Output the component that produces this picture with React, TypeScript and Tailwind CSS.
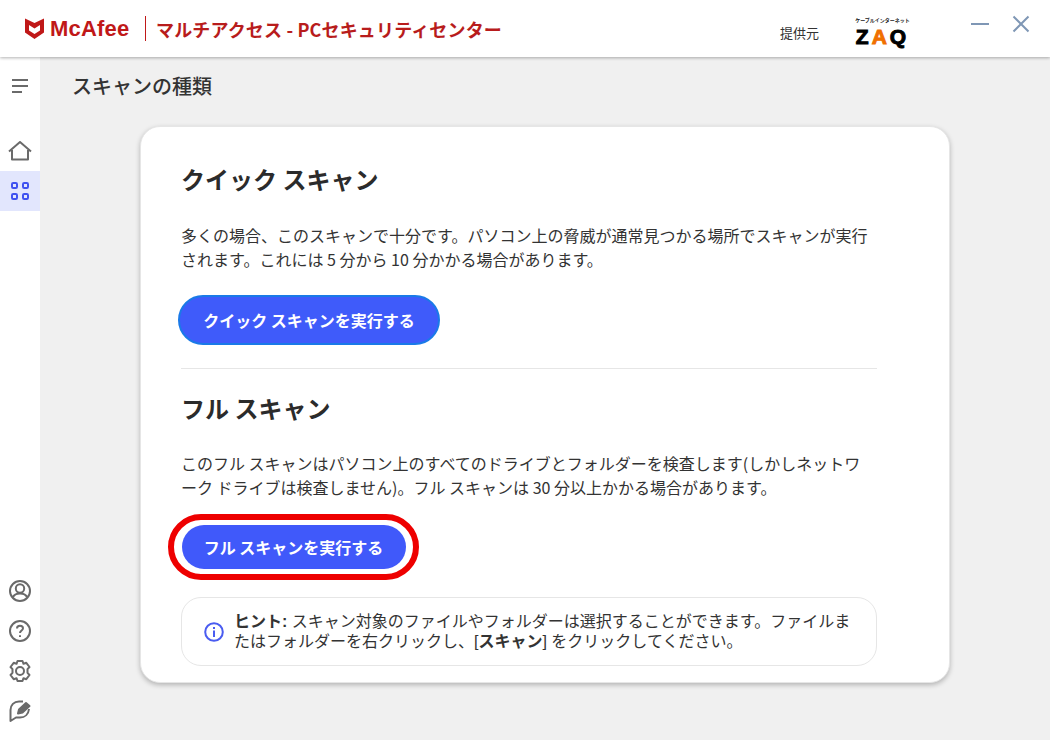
const jp = "font-['Noto_Sans_CJK_JP','Noto_Sans',sans-serif]";

function Shield() {
  return (
    <svg width="19" height="21" viewBox="0 0 19 21" className="shrink-0">
      <path d="M0 0.5 L9.5 5 L19 0.5 V14.5 L9.5 21 L0 14.5 Z M4 7 V12.5 L9.5 16 L15 12.5 V7 L9.5 10.5 Z" fill="#c01818" fillRule="evenodd" />
    </svg>
  );
}

const iconStroke = "#6a6a6a";

function Menu() {
  return (
    <svg width="18" height="16" viewBox="0 0 18 16" fill="none" stroke={iconStroke} strokeWidth="2">
      <path d="M1 2H17M1 8H17M1 14H11" />
    </svg>
  );
}
function Home() {
  return (
    <svg width="24" height="20" viewBox="0 0 24 20" fill="none" stroke={iconStroke} strokeWidth="2" strokeLinejoin="round">
      <path d="M1 10.5 L12 1 L23 10.5 M4 9 V18.5 H20 V9" />
    </svg>
  );
}
function Grid() {
  return (
    <svg width="20" height="20" viewBox="0 0 20 20" fill="none" stroke="#3f52f0" strokeWidth="2">
      <rect x="2" y="2" width="5" height="5" rx="1.2" />
      <rect x="13" y="2" width="5" height="5" rx="1.2" />
      <rect x="2" y="13" width="5" height="5" rx="1.2" />
      <rect x="13" y="13" width="5" height="5" rx="1.2" />
    </svg>
  );
}
function User() {
  return (
    <svg width="24" height="24" viewBox="0 0 24 24" fill="none" stroke={iconStroke} strokeWidth="2">
      <circle cx="12" cy="12" r="10" />
      <circle cx="12" cy="9.5" r="4.2" />
      <path d="M4.8 18.5 C6 15.5 9 14.5 12 14.5 C15 14.5 18 15.5 19.2 18.5" />
    </svg>
  );
}
function Help() {
  return (
    <svg width="24" height="24" viewBox="0 0 24 24" fill="none" stroke={iconStroke} strokeWidth="2">
      <circle cx="12" cy="12" r="10" />
      <path d="M9 9.5 C9 7.5 10.5 6.8 12 6.8 C13.7 6.8 15 7.8 15 9.3 C15 11.5 12 11.5 12 14" />
      <path d="M12 16.2V18" />
    </svg>
  );
}
function Gear() {
  return (
    <svg width="24" height="24" viewBox="0 0 24 24" fill="none" stroke={iconStroke} strokeWidth="2" strokeLinejoin="round">
      <circle cx="12" cy="12" r="4" />
      <path d="M9.5 2 H14.5 L15.5 4.8 L18.3 3.8 L21.5 8 L19.5 10.2 V13.8 L21.5 16 L18.3 20.2 L15.5 19.2 L14.5 22 H9.5 L8.5 19.2 L5.7 20.2 L2.5 16 L4.5 13.8 V10.2 L2.5 8 L5.7 3.8 L8.5 4.8 Z" />
    </svg>
  );
}
function Feedback() {
  return (
    <svg width="24" height="24" viewBox="0 0 24 24" fill="none" stroke={iconStroke} strokeWidth="2" strokeLinejoin="round">
      <path d="M15 2.5 H11 C6 2.5 2.5 6 2.5 11 V22 L8 18.5 H12 C17 18.5 20.5 15 21 10" />
      <path d="M10 14.5 L11 10.5 L18 4 L21.5 7 L14.5 13.5 Z" fill={iconStroke} />
    </svg>
  );
}
function Info() {
  return (
    <svg width="20" height="20" viewBox="0 0 20 20" fill="none" stroke="#4a5cf0" strokeWidth="2">
      <circle cx="10" cy="10" r="8.8" />
      <path d="M10 8.5V15" />
      <path d="M10 5V7" />
    </svg>
  );
}

export default function App() {
  return (
    <div className={`${jp} w-[1050px] h-[740px] overflow-hidden flex flex-col bg-[#f0f0f0] text-[#333]`}>
      <header className="relative z-10 h-[57px] shrink-0 bg-white shadow-[0_1px_3px_rgba(0,0,0,0.3)] flex items-center">
        <div className="ml-[25px] flex items-center">
          <Shield />
          <span className="ml-[6px] w-[82px] text-[22px] leading-none font-bold text-[#c01818] font-['Liberation_Sans',sans-serif] whitespace-nowrap tracking-[0.2px]">McAfee</span>
          <span className="ml-[13px] w-px h-[25px] bg-[#c01818]" />
          <span className="ml-[10px] text-[18px] leading-none font-bold text-[#b81c1c] whitespace-nowrap tracking-[0.15px]">マルチアクセス - PCセキュリティセンター</span>
        </div>
        <div className="ml-auto flex items-center">
          <span className="text-[13px] text-[#333] mr-[35px] mt-[8px]">提供元</span>
          <div className="flex flex-col items-center w-[57px] mt-[6px]">
            <span className="text-[5px] leading-[8px] font-bold text-[#222] whitespace-nowrap">ケーブルインターネット</span>
            <span className="mt-[3px] text-[21px] leading-[20px] font-bold font-['Liberation_Sans',sans-serif] tracking-[3px] text-black whitespace-nowrap [-webkit-text-stroke:1px_currentColor]">Z<span className="text-[#f07000]">A</span>Q</span>
          </div>
          <div className="ml-[60px] mr-[20px] flex items-center gap-[23px] -mt-[10px]">
            <svg width="18" height="2" viewBox="0 0 18 2"><path d="M0 1H18" stroke="#7f97b5" strokeWidth="2" /></svg>
            <svg width="18" height="18" viewBox="0 0 18 18"><path d="M1.5 1.5L16.5 16.5M16.5 1.5L1.5 16.5" stroke="#7f97b5" strokeWidth="2" /></svg>
          </div>
        </div>
      </header>

      <div className="flex flex-1 min-h-0">
        <aside className="w-[40px] shrink-0 bg-white flex flex-col items-center">
          <div className="mt-[21px] h-[16px]"><Menu /></div>
          <div className="mt-[47px] h-[20px]"><Home /></div>
          <div className="mt-[10px] w-full h-[40px] bg-[#e2e6fd] flex items-center justify-center"><Grid /></div>
          <div className="mt-auto mb-[17px] flex flex-col items-center gap-[16px]">
            <div className="h-[24px]"><User /></div>
            <div className="h-[24px]"><Help /></div>
            <div className="h-[24px]"><Gear /></div>
            <div className="h-[24px]"><Feedback /></div>
          </div>
        </aside>

        <main className="flex-1 min-w-0 flex flex-col">
          <h1 className="ml-[32px] mt-[14px] text-[20px] leading-[30px] font-medium text-[#333]">スキャンの種類</h1>
          <section className="ml-[100px] mt-[25px] w-[810px] h-[557px] bg-white rounded-[20px] border border-[#e6e6e6] shadow-[0_2px_5px_rgba(0,0,0,0.25)] pl-[40px] pr-[72px] pt-[34px]">
            <h2 className="text-[24px] leading-[36px] font-bold text-[#2b2b2b]">クイック スキャン</h2>
            <p className="mt-[26px] text-[16px] leading-[24px] text-[#333]">多くの場合、このスキャンで十分です。パソコン上の脅威が通常見つかる場所でスキャンが実行されます。これには 5 分から 10 分かかる場合があります。</p>
            <button className="mt-[24px] -ml-[3px] h-[50px] w-[262px] rounded-full bg-[#3f5bfa] border-2 border-[#1a7ae8] text-white text-[16px] font-bold whitespace-nowrap">クイック スキャンを実行する</button>
            <div className="mt-[23px] h-px bg-[#e6e6e6]" />
            <h2 className="mt-[21px] text-[24px] leading-[36px] font-bold text-[#2b2b2b]">フル スキャン</h2>
            <p className="mt-[25px] max-w-[690px] text-[16px] leading-[24px] text-[#333]">このフル スキャンはパソコン上のすべてのドライブとフォルダーを検査します(しかしネットワーク ドライブは検査しません)。フル スキャンは 30 分以上かかる場合があります。</p>
            <div className="mt-[15px] -ml-[13px] w-[251px] h-[66px] rounded-full border-[6px] border-[#ee0000] flex items-center justify-center">
              <button className="h-[44px] w-[224px] rounded-full bg-[#4059fa] text-white text-[16px] font-bold whitespace-nowrap">フル スキャンを実行する</button>
            </div>
            <div className="mt-[17px] w-[696px] h-[69px] rounded-[20px] border border-[#e6e6e6] flex items-center pl-[22px] pr-[20px] gap-[10px]">
              <span className="shrink-0"><Info /></span>
              <div className="font-['Liberation_Sans','Noto_Sans_CJK_JP',sans-serif] text-[16px] leading-[20px] text-[#333] whitespace-nowrap">
                <div><b className="font-bold">ヒント:</b> <span>スキャン対象のファイルやフォルダーは選択することができます。ファイルま</span></div>
                <div><span>たはフォルダーを右クリックし、[</span><b className="font-bold">スキャン</b><span>] をクリックしてください。</span></div>
              </div>
            </div>
          </section>
        </main>
      </div>
    </div>
  );
}
